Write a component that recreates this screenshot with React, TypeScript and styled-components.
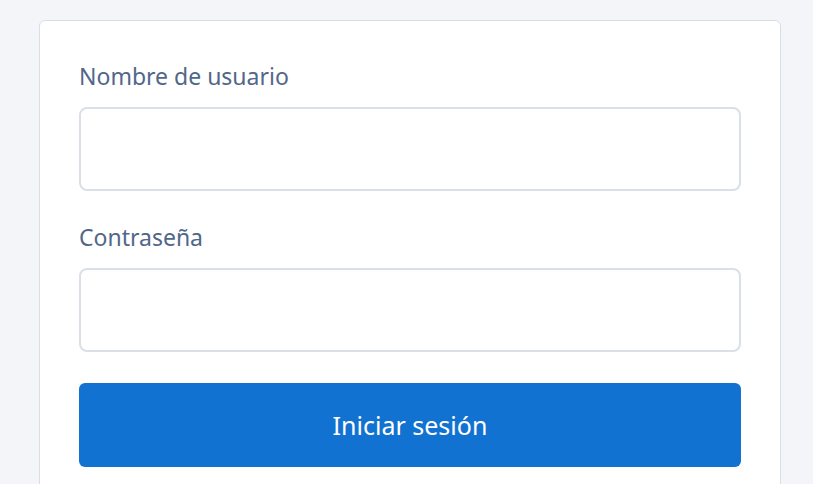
import React from 'react'
import styled, { createGlobalStyle } from 'styled-components'

const GlobalStyle = createGlobalStyle`
    html, body {
        margin: 0;
        padding: 0;
        background: #f4f5f8;
        font-family: 'Noto Sans', 'Open Sans', sans-serif;
    }
`

const Page = styled.div`
    padding: 20px 32px 0 39px;
    height: 484px;
    box-sizing: border-box;
    overflow: hidden;
`

const Card = styled.form`
    width: 742px;
    box-sizing: border-box;
    background: #ffffff;
    border: 1px solid #d8dde6;
    border-radius: 6px;
    padding: 40px 39px 40px;
    display: flex;
    flex-direction: column;
    gap: 31px;
`

const Field = styled.div`
    display: flex;
    flex-direction: column;
    gap: 16px;
`

const Label = styled.label`
    font-size: 23px;
    line-height: 30px;
    color: #516789;
`

const Input = styled.input`
    height: 84px;
    box-sizing: border-box;
    border: 2px solid #dadfe8;
    border-radius: 8px;
    background: #ffffff;
    font-size: 22px;
    padding: 0 18px;
    outline: none;
`

const Submit = styled.button`
    height: 84px;
    border: none;
    border-radius: 6px;
    background: #1272d1;
    color: #ffffff;
    font-family: 'Noto Sans', 'Open Sans', sans-serif;
    font-size: 25px;
    cursor: pointer;
`

export default function App() {
    return <>
        <GlobalStyle />
        <Page>
            <Card onSubmit={(e) => e.preventDefault()}>
                <Field>
                    <Label htmlFor="username">Nombre de usuario</Label>
                    <Input id="username" type="text" />
                </Field>
                <Field>
                    <Label htmlFor="password">Contraseña</Label>
                    <Input id="password" type="password" />
                </Field>
                <Submit type="submit">Iniciar sesión</Submit>
            </Card>
        </Page>
    </>
}
